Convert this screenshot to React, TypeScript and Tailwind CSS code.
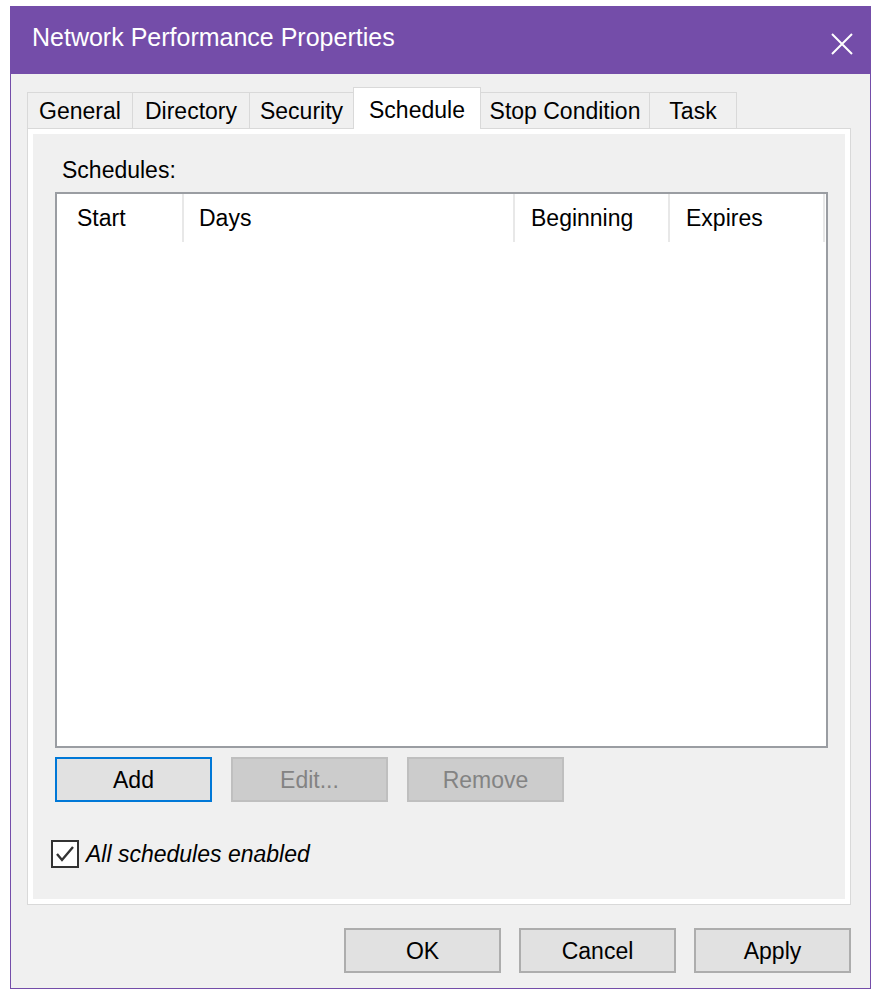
import React from "react";

const font = { fontFamily: '"Liberation Sans", Arial, sans-serif' };

function Tab({ label, w, selected }: { label: string; w: string; selected?: boolean }) {
  if (selected) {
    return (
      <div
        className={`${w} relative z-10 -ml-px -mb-px flex h-[42px] items-start justify-center border border-b-0 border-[#d9d9d9] bg-white pt-[9px] text-[23px] leading-[26px] text-black`}
      >
        {label}
      </div>
    );
  }
  return (
    <div
      className={`${w} -ml-px flex h-[36px] items-start justify-center border border-b-0 border-[#d9d9d9] bg-[#f0f0f0] pt-[5px] text-[23px] leading-[26px] text-black first:ml-0`}
    >
      {label}
    </div>
  );
}

function Btn({
  label,
  variant,
  w = "w-[157px]",
}: {
  label: string;
  variant: "normal" | "focus" | "disabled";
  w?: string;
}) {
  const cls =
    variant === "focus"
      ? "border-2 border-[#0078d7] bg-[#e1e1e1] text-black"
      : variant === "disabled"
      ? "border-2 border-[#bfbfbf] bg-[#cccccc] text-[#838383]"
      : "border-2 border-[#adadad] bg-[#e1e1e1] text-black";
  return (
    <div className={`${w} flex h-[45px] items-center justify-center text-[23px] leading-[26px] ${cls}`}>
      {label}
    </div>
  );
}

export default function App() {
  return (
    <div className="h-[1000px] w-[883px] overflow-hidden bg-white pt-[6px] pl-[10px]" style={font}>
      <div className="flex w-[861px] flex-col border-x border-b border-[#744da9] bg-[#f0f0f0]">
        {/* Title bar */}
        <div className="-mx-px flex h-[68px] items-start justify-between bg-[#744da9] pl-[22px] pr-[18px]">
          <div className="pt-[17px] text-[25px] leading-[28px] text-white">Network Performance Properties</div>
          <div className="pt-[27px]">
            <svg width="22" height="22" viewBox="0 0 22 22">
              <path d="M1 1 L21 21 M21 1 L1 21" stroke="#ffffff" strokeWidth="2" fill="none" />
            </svg>
          </div>
        </div>

        {/* Body */}
        <div className="flex flex-col pl-[16px] pr-[19px] pt-[13px] pb-[15px]">
          {/* Tabs */}
          <div className="flex h-[41px] items-end">
            <Tab label="General" w="w-[106px]" />
            <Tab label="Directory" w="w-[118px]" />
            <Tab label="Security" w="w-[105px]" />
            <Tab label="Schedule" w="w-[128px]" selected />
            <Tab label="Stop Condition" w="w-[170px]" />
            <Tab label="Task" w="w-[88px]" />
          </div>

          {/* Panel */}
          <div className="h-[777px] w-[824px] border border-[#d9d9d9] bg-white p-[5px]">
            <div className="flex h-full flex-col bg-[#f0f0f0] pl-[22px] pt-[23px] pb-[31px]">
              <div className="ml-[7px] h-[26px] text-[23px] leading-[26px] text-black">Schedules:</div>

              {/* List view */}
              <div className="mt-[9px] h-[556px] w-[773px] border-2 border-[#9a9da2] bg-white">
                <div className="flex h-[48px] text-[23px] text-black">
                  <div className="flex w-[127px] items-center border-r-2 border-[#e8e8e8] pl-[20px]">Start</div>
                  <div className="flex w-[331px] items-center border-r-2 border-[#e8e8e8] pl-[15px]">Days</div>
                  <div className="flex w-[155px] items-center border-r-2 border-[#e8e8e8] pl-[16px]">Beginning</div>
                  <div className="flex w-[155px] items-center border-r-2 border-[#e8e8e8] pl-[16px]">Expires</div>
                </div>
              </div>

              {/* Buttons */}
              <div className="mt-[9px] flex gap-[19px]">
                <Btn label="Add" variant="focus" />
                <Btn label="Edit..." variant="disabled" />
                <Btn label="Remove" variant="disabled" />
              </div>

              {/* Checkbox */}
              <div className="-ml-[4px] mt-[38px] flex h-[28px] items-center gap-[7px]">
                <div className="flex h-[28px] w-[28px] items-center justify-center border-2 border-[#333333] bg-white">
                  <svg width="20" height="20" viewBox="0 0 20 20">
                    <path d="M2 10 L7 16 L18 3" stroke="#333333" strokeWidth="2.4" fill="none" />
                  </svg>
                </div>
                <div className="text-[23px] italic leading-[26px] text-black">All schedules enabled</div>
              </div>
            </div>
          </div>

          {/* Dialog buttons */}
          <div className="mt-[23px] flex w-[824px] justify-end gap-[18px]">
            <Btn label="OK" variant="normal" />
            <Btn label="Cancel" variant="normal" />
            <Btn label="Apply" variant="normal" />
          </div>
        </div>
      </div>
    </div>
  );
}
